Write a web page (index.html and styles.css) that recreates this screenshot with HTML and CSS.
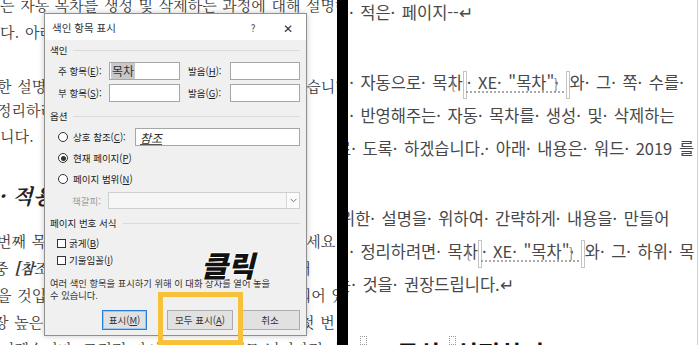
FILE: index.html
```html
<!DOCTYPE html>
<html lang="ko">
<head>
<meta charset="utf-8">
<link rel="stylesheet" href="styles.css">
</head>
<body>
<div class="screen">
  <div class="doc-left">
    <div class="ln l1">는 자동 목차를 생성 및 삭제하는 과정에 대해 설명해</div>
    <div class="ln l2">다. 아래 내용은 워드 2019 를 기준으로</div>
    <div class="ln l3 cut">한 설명을 위하여 간략하게 내용을 만들어 보았습니다</div>
    <div class="ln l4 cut">정리하려면 목차와 그 하위 목차를 정리를 사</div>
    <div class="ln l5">니다.</div>
    <div class="hd">· 적용</div>
    <div class="lb l6 cut">번째 목차 내용을 선택하고 아래 과정을 따라하세요</div>
    <div class="lb cut2">중 <b><i>[참</i></b>조] 탭에서 색인 항목 표시를 눌러 새로 저</div>
    <div class="lb cut">을 것입니다. 입력한 내용은 목차에 나타나게 되어 있</div>
    <div class="lb cut2">장 높은 수준의 목차를 먼저 지정하고 그 다음 첫 번</div>
    <div class="lb">이겠습니다. 그리면 가시나 다음 단계로 넘어가면 에 아래 적용 생</div>
  </div>
  <div class="divider"></div>
  <div class="doc-right">
    <div class="rl r1">· 적은· 페이지--↵</div>
    <div class="rl r2 cut">니· 자동으로· 목차<span class="fld"><span class="br">{</span>· XE· "목차"· <span class="br">}</span></span>와· 그· 쪽· 수를·</div>
    <div class="rl cut">니· 반영해주는· 자동· 목차를· 생성· 및· 삭제하는</div>
    <div class="rl cut3">로· 도록· 하겠습니다.· 아래· 내용은· 워드· 2019 를</div>
    <div class="rl r5 cut4">위한· 설명을· 위하여· 간략하게· 내용을· 만들어</div>
    <div class="rl cut">니· 정리하려면· 목차<span class="fld"><span class="br">{</span>· XE· "목차"· <span class="br">}</span></span>와· 그· 하위· 목</div>
    <div class="rl cut3">는· 것을· 권장드립니다.↵</div>
    <div class="rh"><span class="anc"></span>1.·목차·<span class="anc"></span>설정하기</div>
  </div>

  <div class="dialog">
    <div class="dlg-title">
      <span class="t">색인 항목 표시</span>
      <span class="help">?</span>
      <span class="close">✕</span>
    </div>
    <div class="dlg-body">
      <div class="grp g1"><span>색인</span></div>
      <div class="entry e1">
        <span class="lbl">주 항목(<u>E</u>):</span>
        <span class="inp"><span class="sel">목차</span></span>
        <span class="lbl2">발음(<u>H</u>):</span>
        <span class="inp"></span>
      </div>
      <div class="entry e2">
        <span class="lbl">부 항목(<u>S</u>):</span>
        <span class="inp"></span>
        <span class="lbl2">발음(<u>G</u>):</span>
        <span class="inp"></span>
      </div>
      <div class="grp g2"><span>옵션</span></div>
      <div class="opt o1">
        <span class="radio"></span>
        <span>상호 참조(<u>C</u>):</span>
        <span class="inp wide"><i class="ref">참조</i></span>
      </div>
      <div class="opt o2">
        <span class="radio on"></span>
        <span>현재 페이지(<u>P</u>)</span>
      </div>
      <div class="opt o3">
        <span class="radio"></span>
        <span>페이지 범위(<u>N</u>)</span>
      </div>
      <div class="bm">
        <span class="dis">책갈피:</span>
        <span class="combo"><span class="arrow"><svg width="7" height="5" viewBox="0 0 7 5"><path d="M0.5 0.8 L3.5 3.8 L6.5 0.8" fill="none" stroke="#777" stroke-width="1"/></svg></span></span>
      </div>
      <div class="grp g3"><span>페이지 번호 서식</span></div>
      <div class="chk c1"><span class="box"></span><span>굵게(<u>B</u>)</span></div>
      <div class="chk c2"><span class="box"></span><span>기울임꼴(<u>I</u>)</span></div>
      <div class="desc">여러 색인 항목을 표시하기 위해 이 대화 상자를 열어 놓을<br>수 있습니다.</div>
      <div class="btns">
        <span class="btn def">표시(<u>M</u>)</span>
        <span class="btn all">모두 표시(<u>A</u>)</span>
        <span class="btn cancel">취소</span>
      </div>
    </div>
  </div>
  <div class="callout">클릭</div>
  <div class="highlight"></div>
</div>
</body>
</html>
```

FILE: styles.css
```css
* { box-sizing: border-box; margin: 0; padding: 0; }
html, body { margin: 0; width: 700px; height: 345px; overflow: hidden; background: #fff; }

.screen {
  position: relative;
  display: flex;
  width: 700px;
  height: 345px;
  overflow: hidden;
  background: #fff;
}

/* left document */
.doc-left {
  width: 337px;
  flex: none;
  overflow: hidden;
  font-family: "Noto Serif CJK KR", "Noto Sans CJK KR", serif;
  font-size: 15px;
  color: #3a3a3a;
  white-space: nowrap;
  word-spacing: 1px;
}
.ln { height: 24px; line-height: 24px; }
.l1 { margin-top: -7px; }
.l2 { margin-top: 3px; }
.l3 { margin-top: 30px; }
.l5 { margin-top: 2px; }
.cut { text-indent: -3px; }
.cut2 { text-indent: -6px; }
.hd {
  height: 30px;
  line-height: 30px;
  margin-top: 32px;
  font-size: 21px;
  font-weight: 700;
  font-style: italic;
  color: #222;
  text-indent: -2px;
}
.lb { height: 27px; line-height: 27px; }
.l6 { margin-top: 17px; }

.divider { width: 11px; flex: none; background: #000; }

/* right document */
.doc-right {
  width: 350px;
  flex: none;
  overflow: hidden;
  border-right: 1px solid #cfcfcf;
  font-family: "Noto Sans CJK KR", sans-serif;
  font-size: 16.5px;
  color: #484848;
  white-space: nowrap;
  word-spacing: 2px;
}
.rl { height: 33px; line-height: 33px; }
.r1 { margin-top: -4px; padding-left: 1px; }
.r2 { margin-top: 37px; }
.r5 { margin-top: 37px; }
.doc-right .cut { text-indent: -14px; }
.cut3 { text-indent: -12px; }
.cut4 { text-indent: -8px; }
.fld {
  text-decoration: underline dotted #999;
  text-underline-offset: 3px;
}
.br {
  display: inline-block;
  color: #888;
  border: 1px solid #c4c4c4;
  line-height: 24px;
  height: 28px;
  vertical-align: middle;
  padding: 0 1px;
  font-size: 14px;
}
.rh {
  margin-top: 35px;
  height: 34px;
  line-height: 34px;
  padding-left: 12px;
  font-size: 24px;
  font-weight: 700;
  color: #111;
  word-spacing: 0;
}
.anc {
  display: inline-block;
  width: 7px;
  height: 9px;
  border: 1px dotted #999;
  vertical-align: top;
}

/* dialog */
.dialog {
  position: absolute;
  left: 44px;
  top: 13px;
  width: 263px;
  height: 323px;
  background: #f0f0f0;
  border: 1px solid #8f8f8f;
  box-shadow: 0 0 6px rgba(0, 0, 0, 0.22);
  font-family: "Noto Sans CJK KR", sans-serif;
  font-size: 9.5px;
  color: #222;
  display: flex;
  flex-direction: column;
  white-space: nowrap;
}
.dlg-title {
  height: 26px;
  flex: none;
  background: #fff;
  display: flex;
  align-items: center;
  padding-left: 7px;
  font-size: 10.5px;
  color: #333;
}
.dlg-title .t { flex: 1; }
.help { width: 12px; text-align: center; margin-right: 23px; font-size: 10px; color: #444; }
.close { width: 12px; text-align: center; margin-right: 12px; font-size: 12px; color: #333; }

.dlg-body {
  flex: 1;
  display: flex;
  flex-direction: column;
  padding: 0 6px 0 5px;
}
.grp {
  height: 14px;
  display: flex;
  align-items: center;
  gap: 6px;
}
.grp::after {
  content: "";
  flex: 1;
  border-top: 1px solid #dadada;
}
.g1 { margin-top: 3px; }
.g2 { margin-top: 7px; }
.g3 { margin-top: 7px; }

.entry {
  display: grid;
  grid-template-columns: 59px 71px 50px 70px;
  align-items: center;
  height: 18px;
}
.e1 { margin-top: 5px; }
.e2 { margin-top: 4px; }
.lbl { padding-left: 8px; }
.lbl2 { padding-left: 8px; }
.inp {
  display: flex;
  align-items: center;
  height: 18px;
  background: #fff;
  border: 1px solid #a6a6a6;
  padding-left: 1px;
  font-size: 12px;
}
.sel { background: #c9c9c9; color: #333; padding: 0 1px; line-height: 16px; }

.opt {
  display: flex;
  align-items: center;
  gap: 5px;
  padding-left: 8px;
  height: 14px;
}
.o1 { height: 18px; margin-top: 5px; }
.o2 { margin-top: 5px; }
.o3 { margin-top: 7px; }
.radio {
  width: 10px;
  height: 10px;
  border: 1px solid #333;
  border-radius: 50%;
  background: #fff;
  display: flex;
  align-items: center;
  justify-content: center;
  flex: none;
}
.radio.on::after {
  content: "";
  width: 5px;
  height: 5px;
  border-radius: 50%;
  background: #333;
}
.inp.wide { width: 165px; margin-left: auto; padding-left: 4px; }
.ref { font-style: italic; color: #333; text-decoration: underline; text-decoration-color: #555; }

.bm {
  display: flex;
  align-items: center;
  height: 17px;
  margin-top: 6px;
  padding-left: 22px;
}
.dis { color: #9a9a9a; }
.combo {
  margin-left: auto;
  width: 192px;
  height: 17px;
  background: #f6f6f6;
  border: 1px solid #cfcfcf;
  display: flex;
  justify-content: flex-end;
}
.arrow {
  width: 13px;
  border-left: 1px solid #d8d8d8;
  display: flex;
  align-items: center;
  justify-content: center;
  background: #fbfbfb;
}

.chk {
  display: flex;
  align-items: center;
  gap: 3px;
  padding-left: 7px;
  height: 14px;
}
.c1 { margin-top: 6px; }
.c2 { margin-top: 3px; }
.box {
  width: 9px;
  height: 9px;
  border: 1px solid #333;
  background: #fff;
  flex: none;
}

.desc {
  margin-top: 10px;
  height: 24px;
  line-height: 12px;
  font-size: 9.3px;
  color: #333;
}

.btns {
  display: flex;
  height: 20px;
  margin-top: 9px;
  padding-left: 52px;
}
.btn {
  height: 20px;
  display: flex;
  align-items: center;
  justify-content: center;
  background: #e1e1e1;
  border: 1px solid #adadad;
  color: #333;
}
.btn.def { width: 45px; border: 1px solid #2a7fd4; box-shadow: inset 0 0 0 1px #9cc6ef; }
.btn.all { width: 66px; margin-left: 20px; }
.btn.cancel { width: 60px; margin-left: 7px; }

.callout {
  position: absolute;
  left: 201px;
  top: 248px;
  font-family: "Noto Sans CJK KR", sans-serif;
  font-size: 29px;
  line-height: 32px;
  font-weight: 900;
  font-style: italic;
  color: #111;
  text-shadow: 1px 0 0 #fff, -1px 0 0 #fff, 0 1px 0 #fff, 0 -1px 0 #fff;
}

.highlight {
  position: absolute;
  left: 158px;
  top: 292px;
  width: 85px;
  height: 53px;
  border: 5px solid #f7c13a;
}
```
